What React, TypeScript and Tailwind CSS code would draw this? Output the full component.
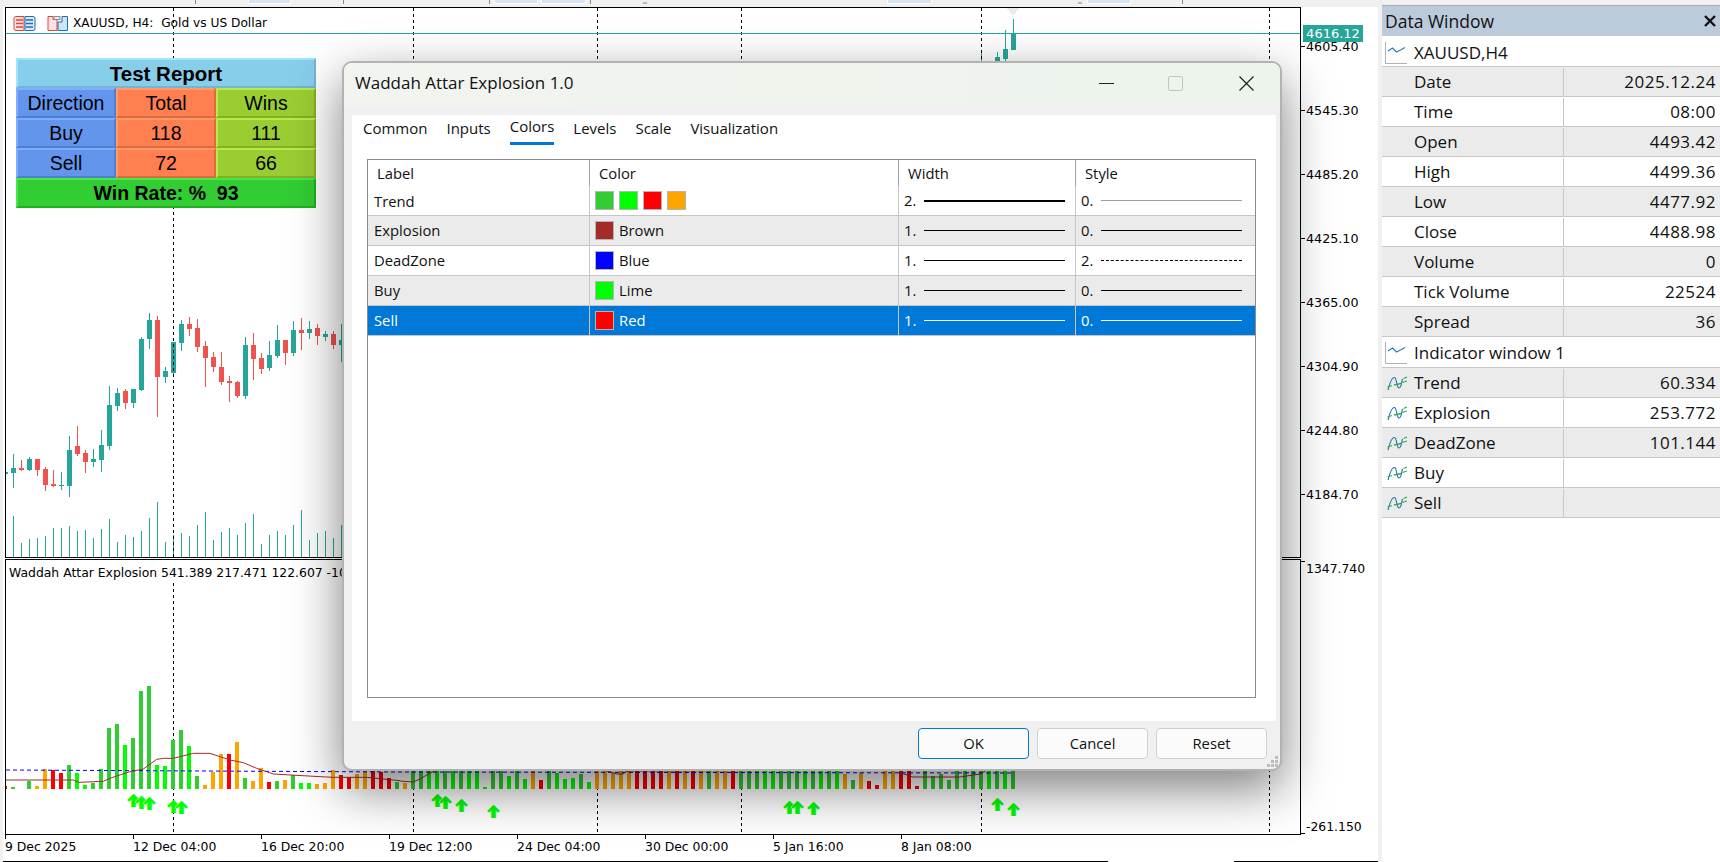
const TEAL = "#26a69a";
const RED = "#ef5350";

// candles traced from the chart: [up, bodyTop, bodyBottom, wickTop, wickBottom], 3x units from y=230
const candles: [number, number, number, number, number][] = [
  [1, 727, 731, 727, 731], [1, 714, 729, 672, 773], [0, 714, 720, 690, 722], [1, 687, 720, 682, 723], [0, 687, 720, 687, 738],
  [0, 717, 765, 711, 783], [0, 762, 768, 720, 771], [1, 765, 768, 726, 780], [1, 660, 768, 618, 801], [0, 648, 672, 588, 678],
  [0, 669, 696, 660, 729], [1, 687, 696, 657, 711], [1, 645, 690, 600, 726], [1, 525, 648, 468, 660], [1, 489, 528, 474, 543],
  [0, 483, 519, 477, 537], [1, 477, 519, 477, 534], [1, 327, 480, 321, 483], [1, 270, 327, 249, 357], [0, 270, 441, 258, 561],
  [1, 423, 441, 411, 459], [1, 336, 429, 336, 441], [1, 282, 339, 270, 363], [0, 282, 297, 261, 318], [0, 294, 351, 267, 366],
  [0, 348, 384, 333, 471], [0, 381, 411, 366, 426], [0, 411, 456, 366, 465], [0, 453, 459, 438, 516], [0, 456, 498, 453, 504],
  [1, 345, 498, 321, 507], [0, 345, 387, 309, 450], [0, 384, 417, 369, 432], [1, 375, 414, 333, 423], [1, 330, 378, 285, 384],
  [0, 330, 369, 330, 405], [1, 300, 369, 273, 378], [0, 300, 309, 264, 360], [1, 297, 309, 273, 327], [0, 294, 318, 282, 345],
  [1, 312, 321, 303, 333], [0, 312, 345, 303, 357], [1, 330, 345, 282, 396],
];

const volumes = [
  858, 939, 927, 924, 918, 894, 894, 888, 903, 900, 924, 897, 867, 936, 915, 921, 903, 864, 816, 936, 915, 909, 918, 885, 846,
  930, 906, 894, 915, 879, 852, 942, 915, 903, 915, 885, 840, 930, 909, 903, 924, 885,
];

const G = "#32cd32";
const L = "#00ff00";
const R = "#ff0000";
const O = "#ffa500";

// histogram left of the dialog shadow, 3x units from y=550, first bar is k=-1
const histA: [string, number][] = [
  [R, 708], [G, 711], [O, 717], [G, 693], [O, 708], [O, 657], [R, 660], [R, 669], [G, 645], [L, 669], [L, 705], [G, 699], [G, 657],
  [G, 534], [G, 522], [L, 585], [G, 564], [G, 423], [G, 408], [L, 645], [L, 648], [G, 570], [G, 540], [L, 588], [G, 678], [O, 705],
  [O, 666], [O, 612], [R, 612], [O, 576], [G, 684], [O, 693], [O, 654], [R, 696], [G, 693], [O, 690], [G, 675], [L, 699], [L, 699],
  [O, 702], [O, 699], [O, 660], [R, 675], [R, 681], [O, 672], [O, 660], [R, 663], [R, 666], [R, 684], [G, 696],
];

// below the dialog, 3x units from y=680, 270 means it runs up under the dialog
const histB: [string, number][] = [
  [O, 308], [G, 270], [G, 270], [L, 270], [L, 270], [G, 270], [L, 270], [G, 270], [L, 270], [L, 270], [L, 321], [G, 270], [G, 270],
  [L, 288], [G, 270], [L, 297], [O, 270], [R, 300], [G, 270], [L, 279], [L, 297], [L, 294], [G, 282], [L, 306], [O, 270], [O, 270],
  [O, 279], [O, 270], [O, 270], [R, 270], [R, 270], [R, 270], [R, 270], [O, 270], [R, 270], [O, 270], [R, 270], [O, 270], [G, 270],
  [O, 270], [O, 270], [R, 270], [G, 270], [G, 270], [G, 270], [L, 270], [L, 270], [G, 270], [G, 270], [G, 270], [L, 270], [G, 270],
  [L, 270], [G, 270], [L, 270], [O, 282], [G, 300], [O, 279], [R, 303], [R, 315], [O, 270], [O, 270], [R, 270], [R, 270], [R, 318],
  [G, 270], [G, 288], [G, 282], [G, 300], [G, 270], [G, 270], [G, 270], [G, 270], [L, 270], [G, 270], [L, 270], [G, 270],
];

// k index and top of each buy arrow
const arrows: [number, number][] = [
  [15, 794], [16, 796], [17, 797], [20, 800], [21, 801], [53, 794], [54, 796], [56, 799], [60, 805], [97, 801], [98, 801], [100, 802],
  [123, 798], [125, 803],
];

const dashes = [173, 413, 597, 741, 981, 1269];

const brownLeft = [
  [16, 690], [220, 690], [235, 697], [310, 694], [330, 685], [350, 678], [390, 665], [430, 657], [470, 628], [490, 625], [520, 625],
  [580, 610], [630, 610], [690, 630], [730, 638], [770, 655], [820, 672], [960, 680], [1000, 682], [1100, 682], [1180, 690], [1200, 692],
]
  .map(([x, y]) => `${x / 3},${550 + y / 3}`)
  .join(" ");

const brownRight = "400,781 413,782 420,779 430,773 437,770 604,770 617,774 623,774 627,771 900,770 901,773 913,777 923,777 960,777 980,774 987,770";

const prices = ["4605.40", "4545.30", "4485.20", "4425.10", "4365.00", "4304.90", "4244.80", "4184.70"];
const times = ["9 Dec 2025", "12 Dec 04:00", "16 Dec 20:00", "19 Dec 12:00", "24 Dec 04:00", "30 Dec 00:00", "5 Jan 16:00", "8 Jan 08:00"];

function Candle({ k, up, top, bottom, high, low }: { k: number; up: boolean; top: number; bottom: number; high: number; low: number }) {
  const x = 11 + 8 * k;
  const color = up ? TEAL : RED;
  return (
    <g>
      <rect x={x + 2} y={high} width={1} height={low - high} fill={color} />
      <rect x={x} y={top} width={5} height={bottom - top} fill={color} />
    </g>
  );
}

function MainChart() {
  return (
    <svg className="block" width={1294} height={549} viewBox="6 8 1294 549" shapeRendering="crispEdges">
      <polygon points="1007,8 1019,8 1013,16" fill="#efe8f0" />
      {volumes.map((v, k) => (
        <rect key={k} x={13 + 8 * k} y={230 + v / 3} width={1} height={557 - (230 + v / 3)} fill={TEAL} />
      ))}
      {candles.map((c, i) => (
        <Candle key={i} k={i - 1} up={c[0] === 1} top={230 + c[1] / 3} bottom={230 + c[2] / 3} high={230 + c[3] / 3} low={230 + c[4] / 3} />
      ))}
      <Candle k={121} up top={50} bottom={50} high={50} low={62} />
      <Candle k={123} up top={57} bottom={62} high={52} low={62} />
      <Candle k={124} up top={49} bottom={59} high={30} low={62} />
      <Candle k={125} up top={33} bottom={50} high={19} low={50} />
      {dashes.map((x) => (
        <line key={x} x1={x + 0.5} x2={x + 0.5} y1={8} y2={557} stroke="#000" strokeDasharray="3 3" />
      ))}
      <rect x={6} y={33} width={1294} height={1} fill={TEAL} />
    </svg>
  );
}

function Arrow({ cx, top }: { cx: number; top: number }) {
  const d = "M0 0 L6 6 L4.5 7.5 L2 5 V13 H-2 V5 L-4.5 7.5 L-6 6 Z";
  return (
    <g shapeRendering="geometricPrecision">
      <path d={d} transform={`translate(${cx - 0.8} ${top})`} fill="#e8ff30" />
      <path d={d} transform={`translate(${cx + 0.8} ${top})`} fill="#50f0f0" />
      <path d={d} transform={`translate(${cx} ${top})`} fill={L} />
    </g>
  );
}

function SubChart() {
  return (
    <svg className="block" width={1294} height={274} viewBox="6 560 1294 274" shapeRendering="crispEdges">
      {dashes.map((x) => (
        <line key={x} x1={x + 0.5} x2={x + 0.5} y1={583} y2={832} stroke="#000" strokeDasharray="3 3" />
      ))}
      {histA.map(([c, t], i) => {
        const y = 550 + t / 3;
        return <rect key={i} x={11 + 8 * (i - 1)} y={y} width={4} height={789 - y} fill={c} />;
      })}
      {histB.map(([c, t], i) => {
        const y = 680 + t / 3;
        return <rect key={i} x={11 + 8 * (i + 49)} y={y} width={4} height={789 - y} fill={c} />;
      })}
      <g shapeRendering="geometricPrecision">
        <polyline points="6,770 400,772 1013,773" fill="none" stroke="#0000ff" strokeDasharray="4 3" />
        <polyline points={brownLeft} fill="none" stroke="#a52a2a" />
        <polyline points={brownRight} fill="none" stroke="#a52a2a" />
      </g>
      {arrows.map(([k, t]) => (
        <Arrow key={k} cx={13.5 + 8 * k} top={t} />
      ))}
    </svg>
  );
}

function TopStrip() {
  const tick = "h-[4px] w-px bg-[#8a8a8a]";
  const tab = "h-[4px] bg-[#d6e4f2] border-x border-b border-white";
  const dots = "h-[2px] mt-[2px] w-[4px] bg-[#b8b8b8]";
  return (
    <div className="flex h-[7px] items-start">
      <div className={`${tick} ml-[195px]`} />
      <div className={`${tab} ml-[52px] w-[43px]`} />
      <div className={`${tick} ml-[52px]`} />
      <div className={`${tick} ml-[145px]`} />
      <div className={`${tab} ml-[4px] w-[44px]`} />
      <div className={`${tab} ml-[3px] w-[45px]`} />
      <div className={`${tick} ml-[4px]`} />
      <div className={`${dots} ml-[52px]`} />
      <div className={`${tab} ml-[240px] w-[45px]`} />
      <div className={`${dots} ml-[146px]`} />
      <div className={`${tab} ml-[5px] w-[44px]`} />
      <div className={`${tick} ml-[51px]`} />
    </div>
  );
}

function ChartIcons() {
  return (
    <div className="flex items-center gap-[10px]">
      <svg width={23} height={17} viewBox="0 0 23 17" fill="none">
        <path d="M11 1.5H3a2 2 0 0 0-2 2v10a2 2 0 0 0 2 2h8z" stroke="#e0443c" fill="#fbe3df" />
        <path d="M12 1.5h8a2 2 0 0 1 2 2v10a2 2 0 0 1-2 2h-8z" stroke="#1c6fb0" fill="#dcebf7" />
        <path d="M3 5h7M3 8.5h7M3 12h7" stroke="#e0443c" strokeWidth={1.5} />
        <path d="M13 5h7M13 8.5h7M13 12h7" stroke="#1c6fb0" strokeWidth={1.5} />
      </svg>
      <svg width={23} height={17} viewBox="0 0 23 17" fill="none">
        <path d="M2 1.5h5v3h4v11H2z" stroke="#e0443c" fill="#fbe3df" />
        <path d="M16 1.5h5.5v14H12V7h4z" stroke="#1c6fb0" fill="#cfe5f6" />
        <rect x={8} y={1.5} width={6} height={3} stroke="#8a8a8a" fill="#eee" />
      </svg>
    </div>
  );
}

function Cell({ bg, light, dark, children }: { bg: string; light: string; dark: string; children: React.ReactNode }) {
  return (
    <div className={`flex items-center justify-center border-2 pt-[2px] ${bg} ${light} ${dark}`}>{children}</div>
  );
}

function TestReport() {
  const blue = { bg: "bg-[#6495ed]", light: "border-t-[#7fadff] border-l-[#7fadff]", dark: "border-b-[#4f7fd0] border-r-[#4f7fd0]" };
  const coral = { bg: "bg-[#ff7f50]", light: "border-t-[#ff9a6a] border-l-[#ff9a6a]", dark: "border-b-[#df6a3e] border-r-[#df6a3e]" };
  const green = { bg: "bg-[#9acd32]", light: "border-t-[#b8ea4a] border-l-[#b8ea4a]", dark: "border-b-[#84b022] border-r-[#84b022]" };
  const rows = [
    ["Direction", "Total", "Wins"],
    ["Buy", "118", "111"],
    ["Sell", "72", "66"],
  ];
  return (
    <div className="absolute left-[10px] top-[50px] w-[300px] font-['Liberation_Sans',sans-serif] text-[19.5px] leading-none text-black">
      <div className="flex h-[30px] items-center justify-center border-2 border-t-[#9de6ff] border-l-[#9de6ff] border-b-[#75b5d0] border-r-[#75b5d0] bg-[#87ceeb] pt-[2px] text-[20.5px] font-bold">
        Test Report
      </div>
      <div className="grid grid-cols-3 auto-rows-[30px]">
        {rows.map((r) => (
          <div key={r[0]} className="contents">
            <Cell {...blue}>{r[0]}</Cell>
            <Cell {...coral}>{r[1]}</Cell>
            <Cell {...green}>{r[2]}</Cell>
          </div>
        ))}
      </div>
      <div className="flex h-[30px] items-center justify-center whitespace-pre border-2 border-t-[#48e748] border-l-[#48e748] border-b-[#20b020] border-r-[#20b020] bg-[#32cd32] pt-[2px] font-bold">
        Win Rate: %  93
      </div>
    </div>
  );
}

function PriceAxis() {
  return (
    <div className="relative w-[77px] pt-[7px] font-['DejaVu_Sans',sans-serif] text-[12.7px] leading-[13px] text-black">
      {prices.map((p) => (
        <div key={p} className="flex h-[64px] items-center gap-px">
          <div className="h-px w-[4px] bg-black" />
          <span>{p}</span>
        </div>
      ))}
      <div className="absolute left-[2px] top-[18px] flex h-[17px] w-[60px] items-center justify-center bg-[#26a69a] text-[13px] text-white">4616.12</div>
    </div>
  );
}

function ChartPane() {
  return (
    <div className="ml-[3px] flex w-[1375px] flex-col bg-white pl-[2px] font-['DejaVu_Sans',sans-serif] text-[12.4px] text-black">
      <div className="flex h-[551px]">
        <div className="relative h-[551px] w-[1296px] border border-black">
          <MainChart />
          <div className="absolute left-[7px] top-[7px] flex items-center gap-[4px]">
            <ChartIcons />
            <span className="whitespace-pre text-[12.2px] leading-[17px]">XAUUSD, H4:  Gold vs US Dollar</span>
          </div>
          <TestReport />
        </div>
        <PriceAxis />
      </div>
      <div className="h-px" />
      <div className="flex h-[276px]">
        <div className="relative h-[276px] w-[1296px] border border-black">
          <SubChart />
          <span className="absolute left-[3px] top-[5px] leading-[15px]">Waddah Attar Explosion 541.389 217.471 122.607 -101.144</span>
        </div>
        <div className="flex w-[77px] flex-col justify-between pb-[1px] pt-[2px] leading-[13px]">
          <div>
            <div className="h-px w-[4px] bg-black" />
            <span className="ml-[5px]">1347.740</span>
          </div>
          <div>
            <span className="ml-[5px]">-261.150</span>
            <div className="h-px w-[4px] bg-black" />
          </div>
        </div>
      </div>
      <div className="flex h-[26px]">
        {times.map((t) => (
          <div key={t} className="w-[128px] shrink-0 leading-[15px]">
            <div className="h-[4px] w-px bg-black" />
            <span className="block">{t}</span>
          </div>
        ))}
      </div>
      <div className="-ml-[2px] flex h-px">
        <div className="w-[1105px] bg-black" />
        <div className="ml-[126px] w-[144px] bg-black" />
      </div>
    </div>
  );
}

function LineIcon() {
  return (
    <svg width={23} height={22} viewBox="0 0 23 22" fill="none" className="shrink-0">
      <path d="M0.5 0V21.5H22" stroke="#b0b0b0" />
      <path d="M3 9L7.5 6L11.5 10L15.5 8L20 5.5" stroke="#2c7fb8" strokeWidth={1.2} />
    </svg>
  );
}

function WaveIcon() {
  return (
    <svg width={21} height={15} viewBox="0 0 21 15" fill="none" className="shrink-0">
      <path d="M1 14C3 6 5 1 7.5 1.5S9.5 12 12 12S14.5 6 15.5 3" stroke="#1f6fa8" strokeWidth={1.1} />
      <path d="M0.5 11L5 9.5M7 9L14 7.5M15.5 6.5L20 5M16.5 2.5L20 1" stroke="#2fb04a" strokeWidth={1.3} />
    </svg>
  );
}

const dataRows: [string, string][] = [
  ["Date", "2025.12.24"],
  ["Time", "08:00"],
  ["Open", "4493.42"],
  ["High", "4499.36"],
  ["Low", "4477.92"],
  ["Close", "4488.98"],
  ["Volume", "0"],
  ["Tick Volume", "22524"],
  ["Spread", "36"],
];

const indicatorRows: [string, string][] = [
  ["Trend", "60.334"],
  ["Explosion", "253.772"],
  ["DeadZone", "101.144"],
  ["Buy", ""],
  ["Sell", ""],
];

function DataRow({ label, value, shaded, icon }: { label: string; value: string; shaded: boolean; icon?: boolean }) {
  return (
    <div className={`grid h-[30px] grid-cols-[182px_156px] border-b border-[#c8c8c8] pt-px ${shaded ? "bg-[#ebebeb]" : "bg-white"}`}>
      <div className="flex items-center gap-[6px] border-r border-[#c8c8c8] pl-[5px]">
        {icon ? <WaveIcon /> : <div className="w-[21px]" />}
        <span>{label}</span>
      </div>
      <div className="flex items-center justify-end pr-[4px] tracking-[0.5px]">{value}</div>
    </div>
  );
}

function DataWindow() {
  return (
    <div className="ml-[4px] flex h-[857px] w-[338px] flex-col self-end bg-white font-['Open_Sans',sans-serif] text-[17px] text-[#111]">
      <div className="flex h-[31px] items-center justify-between border-t border-[#aaa] bg-[#bccbdc] pl-[3px] pr-[4px]">
        <span className="text-[17.5px]">Data Window</span>
        <svg width={12} height={12} viewBox="0 0 12 12" stroke="#111" strokeWidth={2.4}>
          <path d="M1 1L11 11M11 1L1 11" />
        </svg>
      </div>
      <div className="mt-[2px] flex h-[29px] items-center gap-[6px] border-b border-[#c8c8c8] pl-[3px] pt-px">
        <LineIcon />
        <span>XAUUSD,H4</span>
      </div>
      {dataRows.map(([l, v], i) => (
        <DataRow key={l} label={l} value={v} shaded={i % 2 === 0} />
      ))}
      <div className="flex h-[31px] items-center gap-[6px] border-b border-[#c8c8c8] pl-[3px] pt-px">
        <LineIcon />
        <span>Indicator window 1</span>
      </div>
      {indicatorRows.map(([l, v], i) => (
        <DataRow key={l} label={l} value={v} shaded={i % 2 === 0} icon />
      ))}
    </div>
  );
}

function WidthLine({ style, white, thick, faint }: { style: "solid" | "dash"; white?: boolean; thick?: boolean; faint?: boolean }) {
  if (style === "dash") {
    return <div className="w-[141px] border-t border-dashed border-black" />;
  }
  const color = white ? "bg-white" : faint ? "bg-[#a0a0a0]" : "bg-black";
  return <div className={`w-[141px] ${thick ? "h-[2px]" : "h-px"} ${color}`} />;
}

function Swatch({ color }: { color: string }) {
  return <div className={`h-[19px] w-[19px] border border-[#b4b4b4] ${color}`} />;
}

const colorRows = [
  { label: "Explosion", swatch: "bg-[#a52a2a]", name: "Brown", w: "1.", s: "0.", bg: "bg-[#ebebeb]" },
  { label: "DeadZone", swatch: "bg-[#0000ff]", name: "Blue", w: "1.", s: "2.", bg: "bg-white" },
  { label: "Buy", swatch: "bg-[#00ff00]", name: "Lime", w: "1.", s: "0.", bg: "bg-[#ebebeb]" },
  { label: "Sell", swatch: "bg-[#ff0000]", name: "Red", w: "1.", s: "0.", bg: "bg-[#0078d7] text-white" },
];

function ColorsTable() {
  const row = "grid h-[30px] grid-cols-[221px_309px_177px_179px] border-b border-[#c6c6c6]";
  const cell = "flex items-center border-l border-[#c6c6c6] pl-[5px]";
  return (
    <div className="ml-[15px] mt-[14px] h-[539px] w-[889px] border border-[#8a8a90]">
      <div className="grid h-[26px] grid-cols-[221px_309px_177px_179px]">
        <div className="flex items-center pl-[9px]">Label</div>
        <div className="flex items-center border-l border-[#a0a0a0] pl-[9px]">Color</div>
        <div className="flex items-center border-l border-[#a0a0a0] pl-[9px]">Width</div>
        <div className="flex items-center border-l border-[#a0a0a0] pl-[9px]">Style</div>
      </div>
      <div className={`${row} h-[29px]`}>
        <div className="flex items-center pl-[6px] pt-px">Trend</div>
        <div className={`${cell} gap-[5px]`}>
          <Swatch color="bg-[#32cd32]" />
          <Swatch color="bg-[#00ff00]" />
          <Swatch color="bg-[#ff0000]" />
          <Swatch color="bg-[#ffa500]" />
        </div>
        <div className={cell}>
          <span className="w-[20px]">2.</span>
          <WidthLine style="solid" thick />
        </div>
        <div className={cell}>
          <span className="w-[20px]">0.</span>
          <WidthLine style="solid" faint />
        </div>
      </div>
      {colorRows.map((r) => (
        <div key={r.label} className={`${row} ${r.bg}`}>
          <div className="flex items-center pl-[6px]">{r.label}</div>
          <div className={`${cell} gap-[5px]`}>
            <Swatch color={r.swatch} />
            <span>{r.name}</span>
          </div>
          <div className={cell}>
            <span className="w-[20px]">{r.w}</span>
            <WidthLine style="solid" white={r.label === "Sell"} />
          </div>
          <div className={cell}>
            <span className="w-[20px]">{r.s}</span>
            <WidthLine style={r.s === "2." ? "dash" : "solid"} white={r.label === "Sell"} />
          </div>
        </div>
      ))}
    </div>
  );
}

function Dialog() {
  const tabs = ["Common", "Inputs", "Colors", "Levels", "Scale", "Visualization"];
  const btn = "flex h-[31px] w-[111px] items-center justify-center rounded-[4px] border bg-[#fbfbfb]";
  return (
    <div className="absolute left-[342px] top-[61px] flex h-[710px] w-[940px] flex-col rounded-[10px] border-2 border-[#b2b2b2] bg-[#f0f0f0] font-['Open_Sans',sans-serif] text-[14.8px] text-[#111] shadow-[0_18px_50px_rgba(0,0,0,0.5)]">
      <div className="flex h-[42px] items-center justify-between rounded-t-[8px] bg-linear-to-r from-[#f2f4ef] to-[#ecf4ec] pb-[2px] pl-[11px]">
        <span className="text-[17px]">Waddah Attar Explosion 1.0</span>
        <div className="flex items-center">
          <div className="h-px w-[15px] bg-[#222]" />
          <div className="ml-[54px] h-[15px] w-[15px] rounded-[2px] border border-[#c4c4c4]" />
          <svg className="ml-[56px] mr-[26px]" width={15} height={15} viewBox="0 0 15 15" stroke="#222" strokeWidth={1.2}>
            <path d="M0.5 0.5L14.5 14.5M14.5 0.5L0.5 14.5" />
          </svg>
        </div>
      </div>
      <div className="ml-[8px] mt-[10px] h-[606px] w-[924px] bg-white">
        <div className="flex h-[30px] gap-[19px] pl-[11px] text-[15px]">
          {tabs.map((t) => (
            <div key={t} className={`flex items-center pb-[4px] ${t === "Colors" ? "border-b-[3px] border-[#0078d4] pb-[1px]" : ""}`}>
              {t}
            </div>
          ))}
        </div>
        <ColorsTable />
      </div>
      <div className="flex justify-end gap-[8px] pr-[13px] pt-[7px]">
        <div className={`${btn} border-[#0078d4]`}>OK</div>
        <div className={`${btn} border-[#d0d0d0]`}>Cancel</div>
        <div className={`${btn} border-[#d0d0d0]`}>Reset</div>
      </div>
      <svg className="absolute bottom-[2px] right-[2px]" width={11} height={11} viewBox="0 0 11 11" fill="#bdbdbd">
        <rect x={8} y={0} width={3} height={3} />
        <rect x={4} y={4} width={3} height={3} />
        <rect x={8} y={4} width={3} height={3} />
        <rect x={0} y={8} width={3} height={3} />
        <rect x={4} y={8} width={3} height={3} />
        <rect x={8} y={8} width={3} height={3} />
      </svg>
    </div>
  );
}

export default function App() {
  return (
    <div className="relative flex h-[862px] w-[1720px] overflow-hidden bg-[#f0f0f0]">
      <div className="flex w-[1378px] flex-col">
        <TopStrip />
        <ChartPane />
      </div>
      <DataWindow />
      <Dialog />
    </div>
  );
}
